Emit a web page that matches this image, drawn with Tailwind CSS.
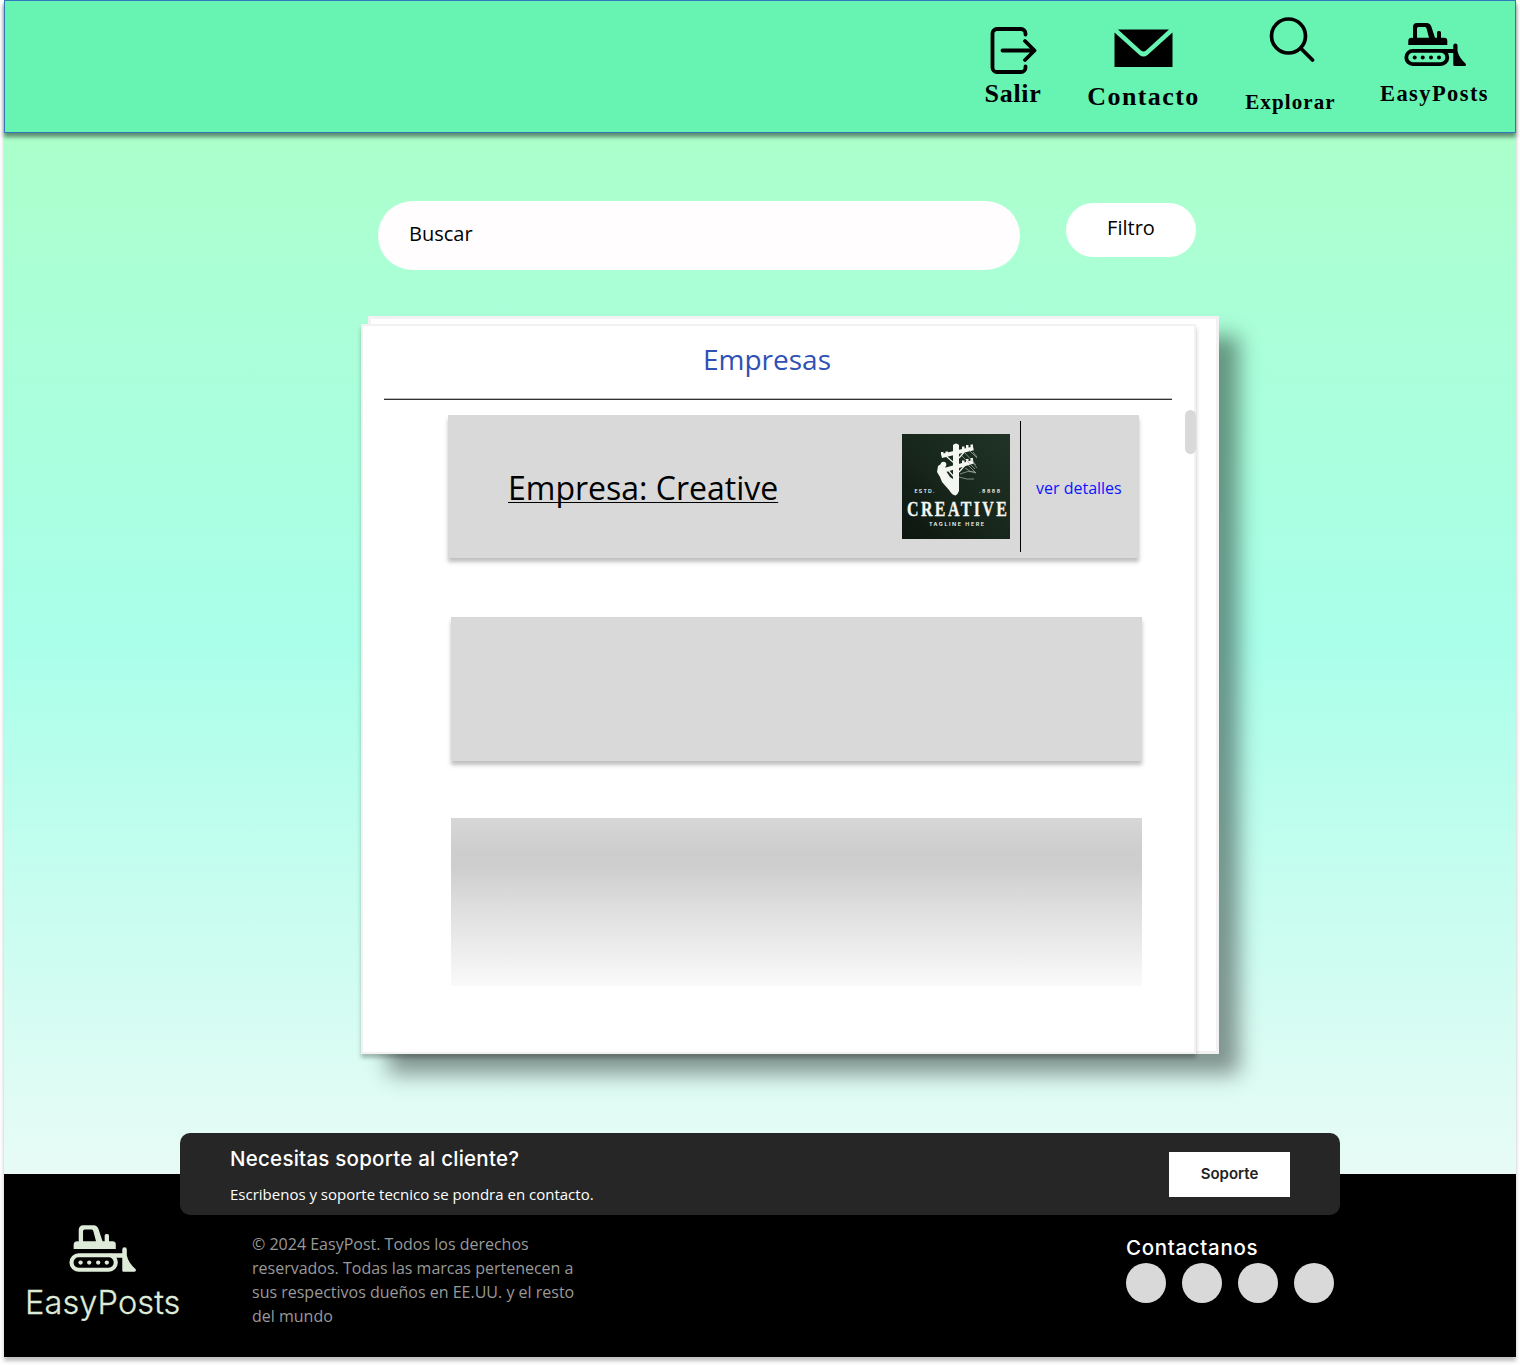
<!DOCTYPE html>
<html lang="es">
<head>
<meta charset="utf-8">
<title>EasyPosts</title>
<script src="https://cdn.jsdelivr.net/npm/@tailwindcss/browser@4"></script>
</head>
<body class="bg-white h-[1365px] overflow-hidden font-['Open_Sans','Noto_Sans',sans-serif]">
<svg class="hidden">
  <symbol id="dozer" viewBox="0 0 62 43">
    <path fill="currentColor" fill-rule="evenodd" d="M9 15V4a4 4 0 0 1 4-4h9.500a5 5 0 0 1 4.800 3.500L31 14.700h2V9.500a1.500 1.500 0 0 1 1.500-1.500h1a1.500 1.500 0 0 1 1.500 1.500v5.200h3.300a3 3 0 0 1 3 3V22H4.300v-4a3.300 3.300 0 0 1 3.300-3.300zM13 14.700h12l-2.500-9.500a2 2 0 0 0-1.800-1.200H14.500A1.500 1.500 0 0 0 13 5.500z"/>
    <rect x="2.300" y="27.800" width="41" height="13.300" rx="6.600" fill="none" stroke="currentColor" stroke-width="3.800"/>
    <g fill="currentColor"><circle cx="10.700" cy="34.500" r="2"/><circle cx="18.700" cy="34.500" r="2"/><circle cx="27" cy="34.500" r="2"/><circle cx="35" cy="34.500" r="2"/>
    <path d="M37 25.900h12.300V22.500a2.100 2.100 0 0 1 4.200 0V28c1 5 4 9 8 12.500.8 1 .5 2.500-1 2.500H50.500a1.200 1.200 0 0 1-1.200-1.200V30H40z"/></g>
  </symbol>
</svg>
<div class="mx-1 w-[1512px] h-[1357px] flex flex-col shadow-[0_4px_4px_rgba(0,0,0,0.25)] bg-[linear-gradient(180deg,#abffc6_0px,#abffca_133px,#abffd7_300px,#a9ffe9_640px,#e8fbf6_1174px)]">
  <header class="h-[133px] shrink-0 border border-[#3277bc] bg-[#67f4b3] shadow-[0_4px_4px_rgba(0,0,0,0.45)] flex justify-end gap-[46px] pr-[26px] font-['Liberation_Serif',serif] font-bold text-black whitespace-nowrap">
    <a class="w-[57px] flex flex-col items-center pt-[26px]">
      <svg class="w-[47px] h-[47px] shrink-0" viewBox="0 0 47 47" fill="none" stroke="#000" stroke-width="3.800" stroke-linecap="round" stroke-linejoin="round"><path d="M35.500 7.500V6.500a4.500 4.500 0 0 0-4.500-4.500H7A4.500 4.500 0 0 0 2.500 6.500v34A4.500 4.500 0 0 0 7 45h24a4.500 4.500 0 0 0 4.500-4.500v-1M12.500 23.500H44M35 14l9.500 9.500L35 33"/></svg>
      <span class="text-[26px] leading-[30px] tracking-[0.7px] mt-[5px]">Salir</span>
    </a>
    <a class="w-[112px] flex flex-col items-center pt-[28px]">
      <svg class="w-[59px] h-[38px] shrink-0" viewBox="0 0 59 38"><path d="M.5 3.500V38h58V3.500L33.500 26q-4 3-8 0zM4 .5h51L32 21.500q-2.500 2-5 0z"/></svg>
      <span class="text-[26px] leading-[30px] tracking-[1.400px] mt-[15px]">Contacto</span>
    </a>
    <a class="w-[90px] flex flex-col items-center pt-[16px]">
      <svg class="w-[46px] h-[46px] ml-[3px] shrink-0" viewBox="0 0 46 46" fill="none" stroke="#000" stroke-width="3.700" stroke-linecap="round"><circle cx="19.500" cy="19" r="17"/><path d="M32 31.500 43.500 43"/></svg>
      <span class="text-[21px] leading-[30px] tracking-[1.100px] mt-[24px]">Explorar</span>
    </a>
    <a class="w-[109px] -ml-[1.500px] flex flex-col items-center pt-[22px]">
      <svg class="w-[62px] h-[43px] shrink-0"><use href="#dozer"/></svg>
      <span class="text-[22.500px] leading-[30px] tracking-[1.400px] mt-[13px]">EasyPosts</span>
    </a>
  </header>

  <main class="h-[1041px] shrink-0 pt-[68px]">
    <div class="flex pl-[374px] text-xl text-black">
      <div class="w-[642px] h-[69px] rounded-full bg-[#fffdfe] pl-[31px] pb-1 flex items-center">Buscar</div>
      <div class="w-[130px] h-[54px] mt-[2px] ml-[46px] rounded-full bg-white pb-1 flex items-center justify-center">Filtro</div>
    </div>

    <section class="mt-[46px] ml-[364px] w-[851px] h-[738px] border-3 border-[#f2f2f2] bg-white shadow-[20px_20px_20px_rgba(0,0,0,0.41)]">
      <div class="relative mt-[5px] -ml-[10px] w-[835px] h-[730px] border-2 border-[#f2f2f2] bg-white shadow-[0_4px_4px_rgba(0,0,0,0.25)]">
        <h1 class="h-[73px] pr-[23px] text-center text-[28px] leading-[66px] text-[#2f51b5]">Empresas</h1>
        <div class="ml-[21px] w-[788px] h-px bg-[#333] shadow-[0_-1px_0_#bbb]"></div>
        <div class="mt-[15px] ml-[85px] w-[691px] h-[143px] bg-[#d9d9d9] shadow-[0_4px_4px_rgba(0,0,0,0.25)] flex items-center">
          <div class="w-[454px] pl-[60px] pt-[3px] text-[32px] text-black underline decoration-1 underline-offset-[2px] [text-decoration-skip-ink:none]">Empresa: Creative</div>
          <svg class="w-[108px] h-[105px] shrink-0" viewBox="0 0 108 105">
            <defs><linearGradient id="night" x1="0" y1="1" x2="1" y2="0"><stop offset="0" stop-color="#0d150f"/><stop offset=".5" stop-color="#18271b"/><stop offset="1" stop-color="#203426"/></linearGradient></defs>
            <rect width="108" height="105" fill="url(#night)"/>
            <g fill="#f4f6f2">
              <path d="M51 11q3-3 6 0v46q-1 3-3.500 4.500Q50 61 47 56L40 48l-2-5-3-5 1-6 3-2 4 1 1 6 4 6 3 2z"/>
              <circle cx="41.500" cy="30.500" r="2.800"/>
              <path d="M39 20l32-7.500.8 3.700L40 24zM42 34l29-8 .8 3.600L44 38z"/>
              <path d="M39 18h2.500v3H39zM43.500 17.500H46v3h-2.500zM60 12.500h2.500v3H60zM64 11h2.500v3H64zM68.500 10.500H71v3h-2.500zM60 26.500h2.500v3H60zM64 25h2.500v3H64zM68.500 24H71v3h-2.500z"/>
            </g>
            <path stroke="#f4f6f2" stroke-width="1.200" fill="none" d="M44 22l8 7M64 16l-7 8M46 36l6 7M65 29l-8 9"/>
            <path stroke="#a9b5aa" stroke-width=".7" fill="none" d="M62 18l12 13M67 16l8 8M60 22l13 13M66 31l8 8M63 34q5 4 11 5M58 40q8-4 15-2M57 43q8 3 15 2M71 18l4 5M71 29l4 5"/>
            <g fill="#f4f6f2" font-family="Inter, sans-serif" font-weight="600">
              <text x="12.500" y="59" font-size="5.200" textLength="20">ESTD.</text>
              <text x="77" y="59" font-size="5.200" textLength="21">.8888</text>
              <text x="27" y="92.300" font-size="5.400" textLength="55">TAGLINE HERE</text>
              <text transform="translate(5 81.500) scale(.84 1.120)" font-size="19" textLength="119" font-family="Liberation Serif, serif" font-weight="700" stroke="#f4f6f2" stroke-width=".3">CREATIVE</text>
            </g>
          </svg>
          <div class="ml-[10px] -mt-px w-px h-[131px] bg-black"></div>
          <a class="ml-[15px] pt-[3px] text-base text-[#0a14ff] whitespace-nowrap">ver detalles</a>
        </div>
        <div class="mt-[59px] ml-[88px] w-[691px] h-[144px] bg-[#d9d9d9] shadow-[0_4px_4px_rgba(0,0,0,0.25)]"></div>
        <div class="mt-[57px] ml-[88px] w-[691px] h-[168px] bg-[linear-gradient(180deg,#d7d7d7_0px,#cdcdcd_34px,#cecece_50px,#dcdcdc_84px,#fafafa_168px)]"></div>
        <div class="absolute right-[-2px] top-[84px] w-[11px] h-[44px] rounded-full bg-[#d9d9d9]"></div>
      </div>
    </section>
  </main>

  <footer class="h-[183px] shrink-0 bg-black">
    <div class="-mt-[41px] ml-[176px] w-[1160px] h-[82px] relative rounded-[10px] bg-[#262626] flex items-center justify-between pl-[50px] pr-[50px] text-white">
      <div class="pt-[2px]">
        <p class="font-['Inter',sans-serif] font-medium text-[20.500px] leading-[30px] tracking-[0.240px] whitespace-nowrap">Necesitas soporte al cliente?</p>
        <p class="mt-[8px] text-[15px] leading-[24px] whitespace-nowrap">Escribenos y soporte tecnico se pondra en contacto.</p>
      </div>
      <button class="w-[121px] h-[45px] bg-white text-[#222] font-['Inter',sans-serif] font-semibold text-[15px]">Soporte</button>
    </div>
    <div class="flex">
      <div class="w-[248px] pl-[21px] pt-[10px] text-[#dfebd9]">
        <svg class="w-[67px] h-[47px] ml-[44px]"><use href="#dozer"/></svg>
        <p class="mt-[11px] font-['Inter',sans-serif] font-light text-[32.500px] leading-[40px] tracking-[0.100px] [-webkit-text-stroke:0.3px_#dfebd9]">EasyPosts</p>
      </div>
      <p class="w-[340px] pt-[17px] text-base leading-6 text-[#999]">© 2024 EasyPost. Todos los derechos<br>reservados. Todas las marcas pertenecen a<br>sus respectivos dueños en EE.UU. y el resto<br>del mundo</p>
      <div class="ml-[534px] pt-[18px] text-white">
        <p class="font-['Inter',sans-serif] font-medium text-[20.500px] leading-[30px] tracking-[0.670px]">Contactanos</p>
        <div class="flex gap-4">
          <i class="size-10 rounded-full bg-[#d9d9d9]"></i><i class="size-10 rounded-full bg-[#d9d9d9]"></i><i class="size-10 rounded-full bg-[#d9d9d9]"></i><i class="size-10 rounded-full bg-[#d9d9d9]"></i>
        </div>
      </div>
    </div>
  </footer>
</div>
</body>
</html>
